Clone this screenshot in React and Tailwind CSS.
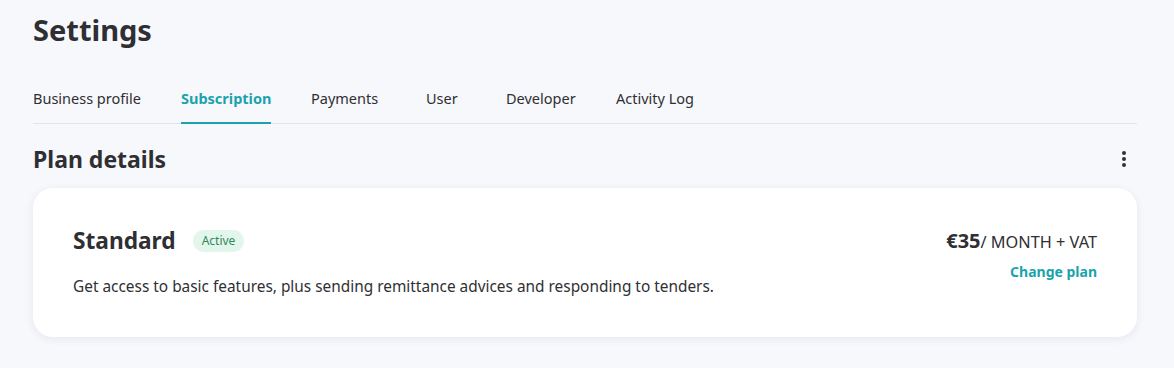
const tabs = [
  { label: 'Business profile', w: 'w-[108px]' },
  { label: 'Subscription', w: 'w-[90px]', active: true },
  { label: 'Payments', w: 'w-[75px]' },
  { label: 'User', w: 'w-[40px]' },
  { label: 'Developer', w: 'w-[70px]' },
  { label: 'Activity Log', w: 'w-[80px]' },
];

function Kebab() {
  return (
    <svg width="6" height="18" viewBox="0 0 6 18" className="text-[#333]">
      <circle cx="3" cy="3" r="2" fill="currentColor" />
      <circle cx="3" cy="9" r="2" fill="currentColor" />
      <circle cx="3" cy="15" r="2" fill="currentColor" />
    </svg>
  );
}

export default function App() {
  return (
    <div className="min-h-[368px] bg-[#f7f8fc] px-[33px] font-['Noto_Sans',sans-serif] text-[#2f2f33]">
      <div className="w-[1104px]">
        <h1 className="pt-[12px] text-[29px] font-bold leading-[36px]">Settings</h1>

        <div className="mt-[40px] flex gap-[40px] border-b border-[#e2e4ea]">
          {tabs.map((t) => (
            <div
              key={t.label}
              className={`${t.w} -mb-px whitespace-nowrap border-b-2 pb-[14px] text-[14.5px] leading-[20px] ${
                t.active ? 'border-[#1aa3ad] font-bold text-[#1aa3ad]' : 'border-transparent'
              }`}
            >
              {t.label}
            </div>
          ))}
        </div>

        <div className="mt-[20px] flex items-center justify-between">
          <h2 className="text-[23px] font-bold leading-[30px]">Plan details</h2>
          <div className="mr-[10px] flex items-center">
            <Kebab />
          </div>
        </div>

        <div className="mt-[14px] flex justify-between rounded-[20px] bg-white px-[40px] pt-[38px] pb-[40px] shadow-[0_2px_8px_rgba(30,40,80,0.08)]">
          <div>
            <div className="flex items-center gap-[17px]">
              <span className="text-[22.7px] font-bold leading-[30px]">Standard</span>
              <span className="rounded-full bg-[#e3f6ec] px-[9px] py-[3px] text-[12px] leading-[16px] text-[#2e8a5a]">Active</span>
            </div>
            <p className="mt-[21px] text-[15.4px] leading-[20px]">
              Get access to basic features, plus sending remittance advices and responding to tenders.
            </p>
          </div>
          <div className="flex flex-col items-end">
            <div className="flex items-baseline leading-[30px]">
              <span className="text-[20px] font-bold">€35</span>
              <span className="text-[16.3px]">/ MONTH + VAT</span>
            </div>
            <a className="mt-[6px] text-[14px] font-bold leading-[18px] text-[#1aa3ad]">Change plan</a>
          </div>
        </div>
      </div>
    </div>
  );
}
